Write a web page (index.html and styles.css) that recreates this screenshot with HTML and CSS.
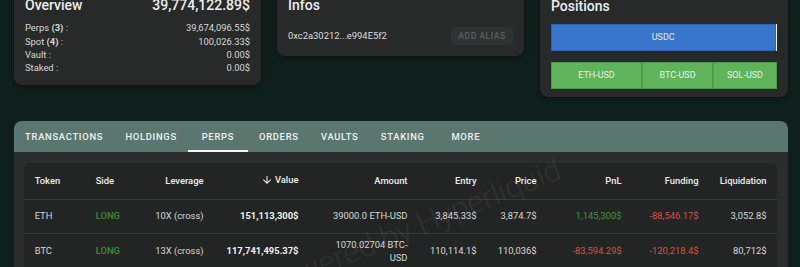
FILE: index.html
```html
<!DOCTYPE html>
<html lang="en">
<head>
<meta charset="utf-8">
<title>Portfolio</title>
<link rel="stylesheet" href="styles.css">
</head>
<body>
<div class="page">
  <div class="top">
    <section class="card overview">
      <div class="head"><span class="title">Overview</span><span class="title">39,774,122.89$</span></div>
      <div class="row"><span>Perps <b>(3)</b> :</span><span>39,674,096.55$</span></div>
      <div class="row"><span>Spot <b>(4)</b> :</span><span>100,026.33$</span></div>
      <div class="row"><span>Vault :</span><span>0.00$</span></div>
      <div class="row"><span>Staked :</span><span>0.00$</span></div>
    </section>
    <section class="card infos">
      <div class="title">Infos</div>
      <div class="addr-row"><span class="addr">0xc2a30212...e994E5f2</span><button class="alias" disabled>ADD ALIAS</button></div>
    </section>
    <section class="card positions">
      <div class="title">Positions</div>
      <div class="bar usdc">
        <div class="seg blue">USDC</div>
        <div class="seg white"></div>
      </div>
      <div class="bar perps">
        <div class="seg green" style="width: 91px">ETH-USD</div>
        <div class="seg green" style="width: 71px">BTC-USD</div>
        <div class="seg green" style="width: 64px">SOL-USD</div>
      </div>
    </section>
  </div>

  <section class="panel">
    <nav class="tabs">
      <div class="tab">TRANSACTIONS</div>
      <div class="tab">HOLDINGS</div>
      <div class="tab active">PERPS</div>
      <div class="tab">ORDERS</div>
      <div class="tab">VAULTS</div>
      <div class="tab">STAKING</div>
      <div class="tab">MORE</div>
    </nav>
    <div class="panel-body">
      <div class="table-card">
        <table>
          <colgroup>
            <col class="c-token"><col class="c-side"><col class="c-lev"><col class="c-value"><col class="c-amount"><col class="c-entry"><col class="c-price"><col class="c-pnl"><col class="c-fund"><col class="c-liq">
          </colgroup>
          <thead>
            <tr>
              <th class="l">Token</th>
              <th class="l">Side</th>
              <th>Leverage</th>
              <th><span class="sort"><svg viewBox="0 0 24 24" width="12" height="12"><path fill="currentColor" d="M20 12l-1.41-1.41L13 16.17V4h-2v12.17l-5.58-5.59L4 12l8 8 8-8z"/></svg>Value</span></th>
              <th>Amount</th>
              <th>Entry</th>
              <th>Price</th>
              <th>PnL</th>
              <th>Funding</th>
              <th>Liquidation</th>
            </tr>
          </thead>
          <tbody>
            <tr>
              <td class="l">ETH</td>
              <td class="l long">LONG</td>
              <td>10X (cross)</td>
              <td class="val">151,113,300$</td>
              <td>39000.0 ETH-USD</td>
              <td>3,845.33$</td>
              <td>3,874.7$</td>
              <td class="pos">1,145,300$</td>
              <td class="neg">-88,546.17$</td>
              <td>3,052.8$</td>
            </tr>
            <tr>
              <td class="l">BTC</td>
              <td class="l long">LONG</td>
              <td>13X (cross)</td>
              <td class="val">117,741,495.37$</td>
              <td>1070.02704 BTC-USD</td>
              <td>110,114.1$</td>
              <td>110,036$</td>
              <td class="neg">-83,594.29$</td>
              <td class="neg">-120,218.4$</td>
              <td>80,712$</td>
            </tr>
          </tbody>
        </table>
      </div>
    </div>
  </section>
</div>
<div class="watermark">Powered by Hyperliquid</div>
</body>
</html>
```

FILE: styles.css
```css
* { box-sizing: border-box; }

html, body {
  margin: 0;
  padding: 0;
}

body {
  background: #0f1f1c;
  font-family: Roboto, "Liberation Sans", sans-serif;
  color: #dcdede;
  font-size: 9.4px;
  line-height: 1.42;
  overflow: hidden;
  height: 267px;
  position: relative;
}

.page {
  padding: 0 12px 0 14px;
}

.top {
  display: grid;
  grid-template-columns: 1fr 1fr 1fr;
  column-gap: 16px;
  align-items: start;
  margin-top: -15px;
}

.card {
  background: #282a2a;
  border-radius: 8px;
  padding: 10.7px 11px;
  box-shadow: 0 2px 4px rgba(0, 0, 0, 0.35);
}

.title {
  font-size: 14px;
  font-weight: 500;
  line-height: 18.7px;
  color: #eceeee;
}

.head {
  display: flex;
  justify-content: space-between;
  margin-bottom: 7px;
}

.row {
  display: flex;
  justify-content: space-between;
  color: #d6d8d8;
}

.row b { font-weight: 700; }

.addr-row {
  display: flex;
  justify-content: space-between;
  align-items: center;
  margin-top: 12.7px;
}

.addr { color: #dcdede; }

.alias {
  height: 18px;
  width: 62px;
  border: none;
  border-radius: 3px;
  background: #2f3232;
  color: #5c6060;
  font-family: Roboto, "Liberation Sans", sans-serif;
  font-size: 8.6px;
  font-weight: 500;
  letter-spacing: 0.5px;
  padding: 0;
}

.positions {
  padding-top: 12px;
  padding-bottom: 8px;
}

.bar {
  display: flex;
  height: 27px;
}

.usdc { margin-top: 8.4px; }
.perps { margin-top: 11px; }

.seg {
  display: flex;
  align-items: center;
  justify-content: center;
  color: #e4ecf4;
  font-size: 9px;
}

.blue {
  flex: 1;
  background: #3a75cc;
  border: 1px solid #2f63b0;
}

.white {
  width: 1.5px;
  background: #f2f2f2;
}

.green {
  background: #5fb35b;
  border: 1px solid #4f9a4c;
  color: #e8f2e6;
}

.panel {
  margin-top: 24px;
  border-radius: 8px 8px 0 0;
  overflow: hidden;
  background: #2b2d2d;
}

.tabs {
  display: flex;
  background: #5a766e;
  height: 31px;
}

.tab {
  min-width: 60px;
  padding: 0 11.1px;
  display: flex;
  align-items: center;
  justify-content: center;
  font-size: 9.4px;
  font-weight: 500;
  letter-spacing: 0.72px;
  color: #eef3f1;
  position: relative;
}

.tab.active::after {
  content: "";
  position: absolute;
  left: 0;
  right: 0;
  bottom: 0;
  height: 2px;
  background: #f4f6f5;
}

.panel-body {
  padding: 11px 11px 0 10px;
}

.table-card {
  background: #232525;
  border-radius: 6px 6px 0 0;
}

table {
  width: 100%;
  table-layout: fixed;
  border-collapse: collapse;
}

.c-token { width: 61px; }
.c-side { width: 55px; }
.c-lev { width: 74px; }
.c-value { width: 95px; }
.c-amount { width: 109px; }
.c-entry { width: 69px; }
.c-price { width: 60px; }
.c-pnl { width: 85px; }
.c-fund { width: 77px; }
.c-liq { width: 68px; }

th, td {
  text-align: right;
  padding: 4px 10.5px 4px 10.7px;
  border-bottom: 1px solid #383a3a;
}

th {
  height: 36px;
  font-weight: 500;
  color: #eceeee;
}

td {
  height: 34px;
  color: #d6d8d8;
}

th.l, td.l { text-align: left; }

.sort {
  display: inline-flex;
  align-items: center;
  gap: 2px;
}

.sort svg { display: block; }

.val {
  font-weight: 700;
  color: #f0f2f2;
}

.long {
  color: #3f8a3c;
  font-weight: 500;
}

.pos { color: #4b8f41; }
.neg { color: #d9534a; }

.watermark {
  position: absolute;
  left: 264px;
  top: 266px;
  font-size: 31px;
  font-weight: 300;
  color: rgba(255, 255, 255, 0.08);
  transform: rotate(-22deg);
  transform-origin: left center;
  white-space: nowrap;
  pointer-events: none;
}
```
